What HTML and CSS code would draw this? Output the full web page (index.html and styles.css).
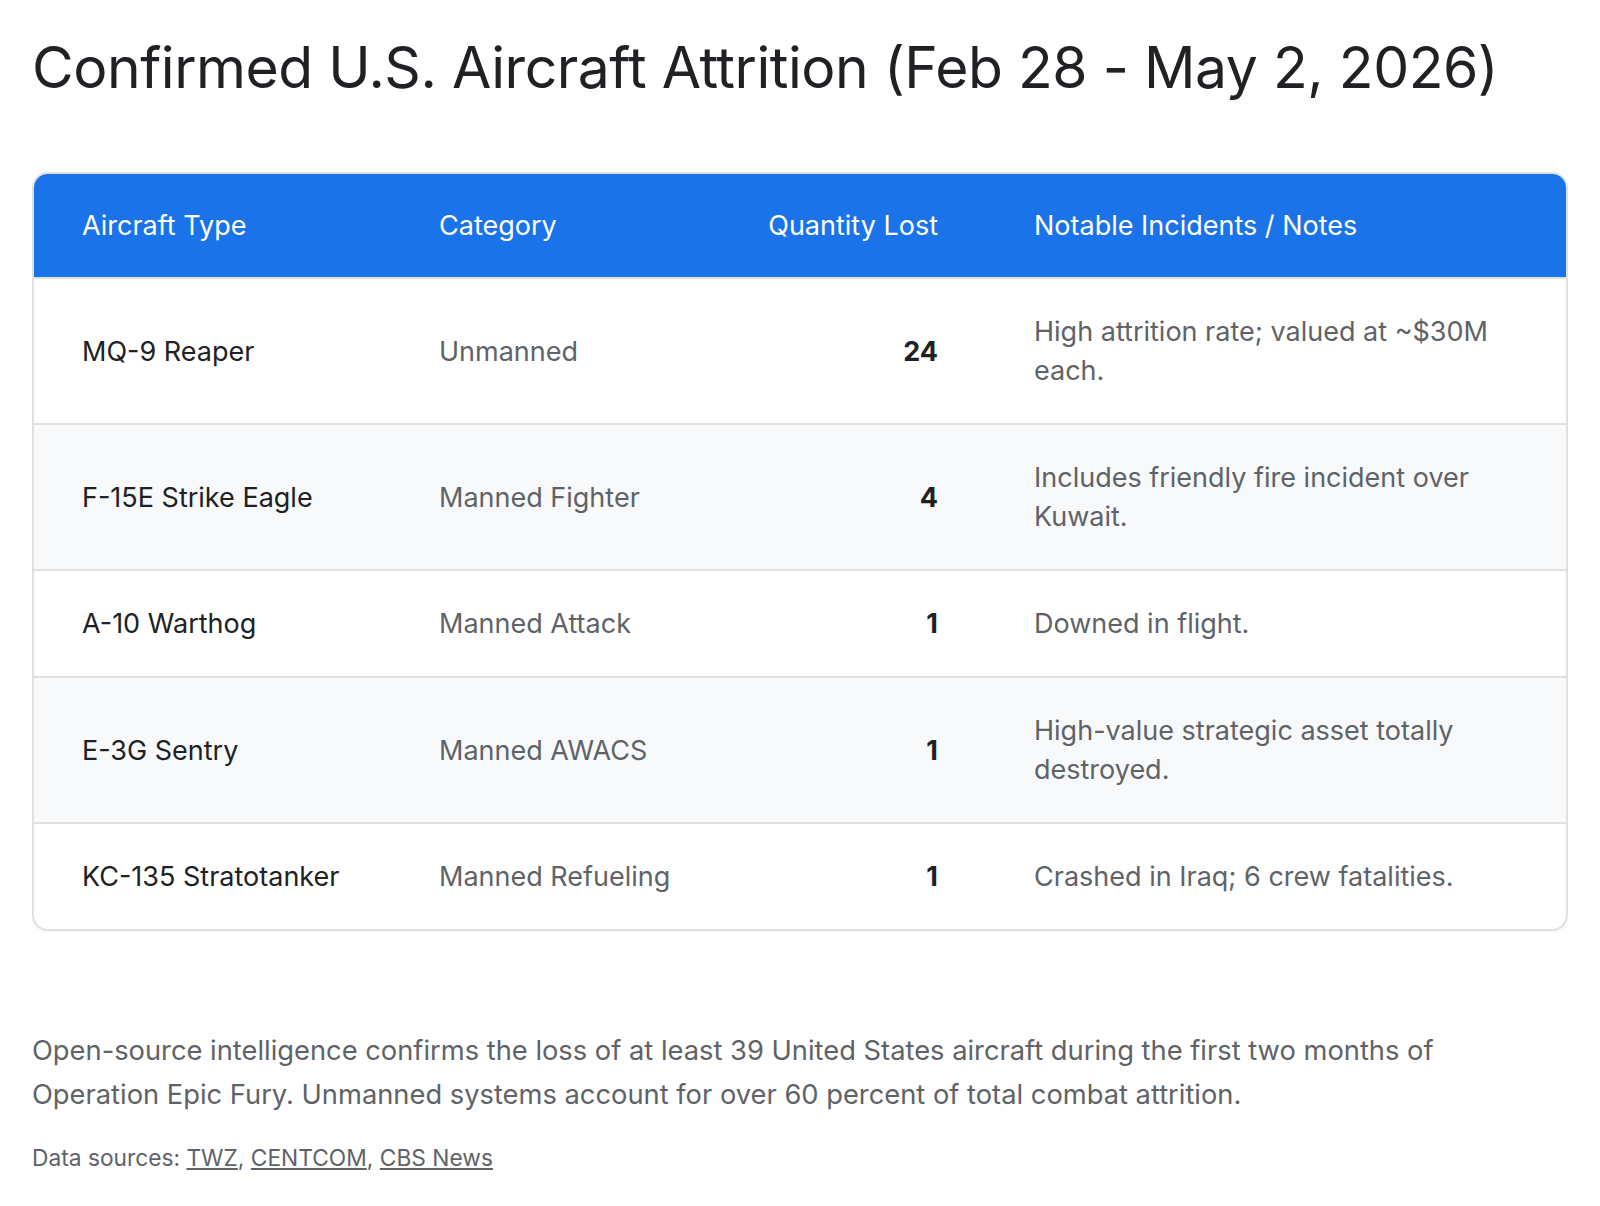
FILE: index.html
```html
<!DOCTYPE html>
<html lang="en">
<head>
<meta charset="utf-8">
<title>Confirmed U.S. Aircraft Attrition</title>
<link rel="stylesheet" href="styles.css">
</head>
<body>
<main class="page">
  <h1 class="title">Confirmed U.S. Aircraft Attrition (Feb 28 - May 2, 2026)</h1>
  <div class="card">
    <table class="data">
      <colgroup>
        <col class="c1"><col class="c2"><col class="c3"><col class="c4">
      </colgroup>
      <thead>
        <tr>
          <th>Aircraft Type</th>
          <th>Category</th>
          <th class="num">Quantity Lost</th>
          <th>Notable Incidents / Notes</th>
        </tr>
      </thead>
      <tbody>
        <tr>
          <td class="name">MQ-9 Reaper</td>
          <td class="muted">Unmanned</td>
          <td class="num qty">24</td>
          <td class="muted">High attrition rate; valued at ~$30M each.</td>
        </tr>
        <tr>
          <td class="name">F-15E Strike Eagle</td>
          <td class="muted">Manned Fighter</td>
          <td class="num qty">4</td>
          <td class="muted">Includes friendly fire incident over Kuwait.</td>
        </tr>
        <tr>
          <td class="name">A-10 Warthog</td>
          <td class="muted">Manned Attack</td>
          <td class="num qty">1</td>
          <td class="muted">Downed in flight.</td>
        </tr>
        <tr>
          <td class="name">E-3G Sentry</td>
          <td class="muted">Manned AWACS</td>
          <td class="num qty">1</td>
          <td class="muted">High-value strategic asset totally destroyed.</td>
        </tr>
        <tr>
          <td class="name">KC-135 Stratotanker</td>
          <td class="muted">Manned Refueling</td>
          <td class="num qty">1</td>
          <td class="muted">Crashed in Iraq; 6 crew fatalities.</td>
        </tr>
      </tbody>
    </table>
  </div>
  <p class="summary">Open-source intelligence confirms the loss of at least 39 United States aircraft during the first two months of Operation Epic Fury. Unmanned systems account for over 60 percent of total combat attrition.</p>
  <p class="sources">Data sources: <a href="#">TWZ</a>, <a href="#">CENTCOM</a>, <a href="#">CBS News</a></p>
</main>
</body>
</html>
```
FILE: styles.css
```css
html, body {
  margin: 0;
  padding: 0;
  background: #ffffff;
}
body {
  font-family: Inter, Roboto, "Noto Sans", "Liberation Sans", sans-serif;
  color: #202124;
}
.page {
  padding: 32px 32px 40px;
}
.title {
  margin: 0 0 68px;
  font-family: Inter, Roboto, "Noto Sans", sans-serif;
  font-weight: 400;
  font-size: 57px;
  line-height: 72px;
  color: #202124;
  letter-spacing: -0.45px;
}
.card {
  border: 2px solid #e0e0e0;
  border-radius: 16px;
  overflow: hidden;
  box-shadow: 0 1px 2px rgba(0,0,0,0.06);
}
.data {
  width: 100%;
  border-collapse: collapse;
  table-layout: fixed;
  font-size: 27px;
  line-height: 39px;
}
.c1 { width: 357px; }
.c2 { width: 330px; }
.c3 { width: 265px; }
.c4 { width: auto; }
.data th {
  background: #1a73e8;
  color: #ffffff;
  font-weight: 400;
  text-align: left;
  white-space: nowrap;
  padding: 32px 48px;
}
.data th.num {
  padding-left: 8px;
}
.data td {
  padding: 33px 48px;
  vertical-align: middle;
  border-top: 2px solid #e0e0e0;
}
.data tbody tr:nth-child(even) td {
  background: #f8f9fa;
}
.data .num {
  text-align: right;
}
.name {
  color: #202124;
}
.muted {
  color: #5f6368;
}
.qty {
  font-weight: 700;
  color: #202124;
}
.summary {
  margin: 98px 0 0;
  font-size: 27.3px;
  line-height: 44px;
  color: #5f6368;
}
.sources {
  margin: 24px 0 0;
  font-size: 22.75px;
  line-height: 34px;
  color: #5f6368;
}
.sources a {
  color: #5f6368;
  text-decoration: underline;
}
```
